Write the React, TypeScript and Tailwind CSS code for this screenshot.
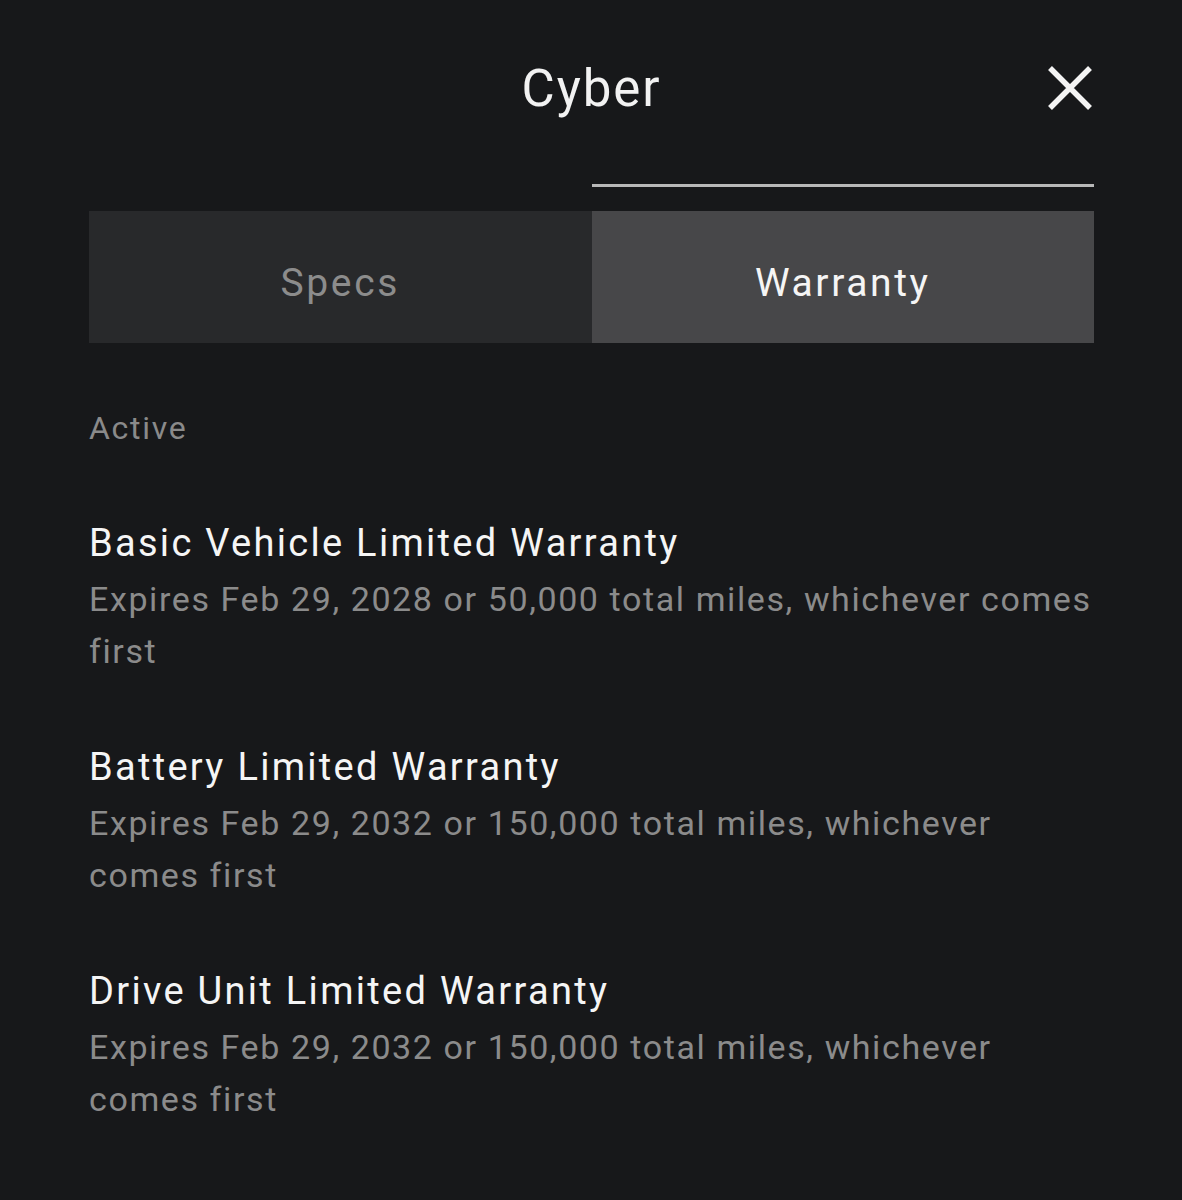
const warranties = [
  {
    title: "Basic Vehicle Limited Warranty",
    lines: ["Expires Feb 29, 2028 or 50,000 total miles, whichever comes", "first"],
  },
  {
    title: "Battery Limited Warranty",
    lines: ["Expires Feb 29, 2032 or 150,000 total miles, whichever", "comes first"],
  },
  {
    title: "Drive Unit Limited Warranty",
    lines: ["Expires Feb 29, 2032 or 150,000 total miles, whichever", "comes first"],
  },
];

function CloseIcon() {
  return (
    <svg width="48" height="48" viewBox="0 0 48 48" fill="none">
      <path d="M4 4L44 44M44 4L4 44" stroke="#f4f4f4" strokeWidth="5.5" strokeLinecap="butt" />
    </svg>
  );
}

export default function App() {
  return (
    <div
      className="min-h-[1200px] bg-[#17181a] pl-[89px] pr-[88px] text-[#f2f2f2]"
      style={{ fontFamily: "Roboto, 'Noto Sans', sans-serif" }}
    >
      <header className="grid h-[176px] grid-cols-[1fr_auto_1fr] items-center">
        <div />
        <h1 className="text-[51px] leading-none tracking-[1.9px] font-normal">Cyber</h1>
        <div className="flex justify-end">
          <button className="flex h-[48px] w-[48px] items-center justify-center">
            <CloseIcon />
          </button>
        </div>
      </header>

      <div className="grid grid-cols-2 pt-[8px]">
        <div />
        <div className="h-[3px] bg-[#b8b8b8]" />
      </div>

      <div className="mt-[24px] grid h-[132px] grid-cols-2">
        <button className="flex items-center justify-center bg-[#28292b] pt-[12px] text-[39px] tracking-[2.6px] text-[#8c8c8c]">
          Specs
        </button>
        <button className="flex items-center justify-center bg-[#474749] pt-[12px] text-[39px] tracking-[2.6px] text-[#f5f5f5]">
          Warranty
        </button>
      </div>

      <div className="mt-[65px] text-[32px] leading-[40px] tracking-[1.7px] text-[#8a8a8a]">Active</div>

      <div className="mt-[67px] flex flex-col gap-[62px]">
        {warranties.map((w) => (
          <div key={w.title}>
            <div className="text-[38px] leading-[56px] tracking-[2.3px] text-[#f5f5f5]">{w.title}</div>
            <div className="mt-[2px] text-[34px] leading-[52px] tracking-[1.6px] text-[#8b8b8b]">
              {w.lines.map((l) => (
                <span key={l} className="block whitespace-nowrap">
                  {l}
                </span>
              ))}
            </div>
          </div>
        ))}
      </div>
    </div>
  );
}
